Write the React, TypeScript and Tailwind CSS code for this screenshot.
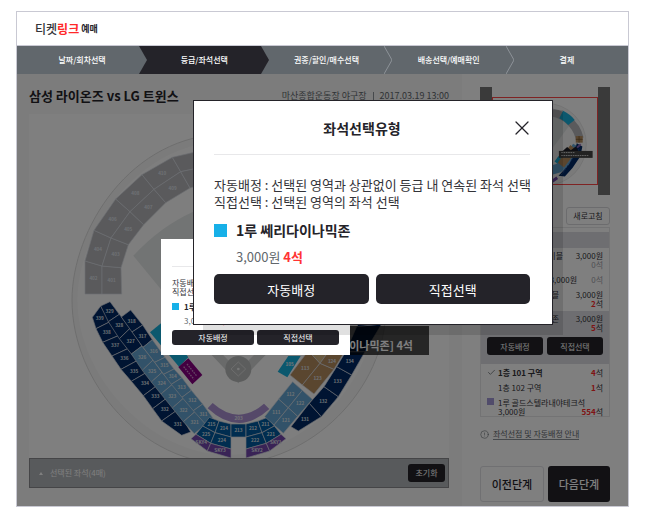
import React from 'react';
import { Check, CircleAlert, X } from 'lucide-react';

type Point = [number, number];

interface BandProps {
  left: Point[];
  right: Point[];
  labels: string[];
  fills: string[];
}

const steps = [
  { id: 'date', label: '날짜/회차선택' },
  { id: 'seat', label: '등급/좌석선택' },
  { id: 'ticket', label: '권종/할인/매수선택' },
  { id: 'delivery', label: '배송선택/예매확인' },
  { id: 'pay', label: '결제' },
];

const NAVY = '#002864';
const SKY = '#64a5d2';
const BLUE = '#005aa0';
const CYAN = '#17b0dc';
const TAN = '#b48c5f';
const GRAY = '#b4b4b8';
const VIOLET = '#7346ac';

// One row of blocks between two edges
const Band: React.FC<BandProps> = ({ left, right, labels, fills }) => (
  <>
    {labels.map((label, i) => {
      const pts = [left[i], right[i], right[i + 1], left[i + 1]];
      const cx = pts.reduce((s, p) => s + p[0], 0) / 4;
      const cy = pts.reduce((s, p) => s + p[1], 0) / 4;
      return (
        <g key={i}>
          <polygon points={pts.map((p) => p.join(',')).join(' ')} fill={fills[i] ?? fills[fills.length - 1]} stroke="#d8dde4" strokeWidth="2" />
          {label && <text x={cx} y={cy + 5} textAnchor="middle" fontSize="14" fontWeight="700" fill="#dde1e8">{label}</text>}
        </g>
      );
    })}
  </>
);

const StadiumMap = () => (
  <svg viewBox="87 342 1260 1032" className="block w-full" role="img" aria-label="좌석 배치도">
    <rect x="87" y="342" width="1260" height="1032" fill="#ffffff" />
    <path d="M216 900 C216 690 390 402 684 402 C960 402 1158 690 1158 920 C1158 1170 930 1392 684 1392 C430 1392 216 1150 216 900Z" fill="#f6f6f6" stroke="#dddddd" strokeWidth="3" />
    <path d="M232 900 C232 710 400 424 684 424 C940 424 1125 700 1125 920 C1125 1150 910 1365 684 1365 C450 1365 232 1130 232 900Z" fill="#fcfcfc" />
    {/* outfield */}
    <path d="M400 767 Q480 680 580 635 L800 610 L960 767 L715 1150Z" fill="#e4e8e8" />

    <g transform="translate(60 330)">
      <Band
        left={[[195, 552], [195, 453], [222, 361], [287, 267], [366, 194], [457, 142], [535, 124]]}
        right={[[246, 552], [246, 468], [273, 384], [330, 305], [402, 238], [482, 185], [545, 172]]}
        labels={['402', '404', '406', '408', '410', '']}
        fills={[GRAY]}
      />
      <Band
        left={[[246, 552], [246, 468], [273, 384], [330, 305], [402, 238], [482, 185], [545, 172]]}
        right={[[305, 552], [303, 473], [325, 404], [371, 344], [437, 278], [510, 234], [560, 220]]}
        labels={['401', '403', '405', '407', '409', '']}
        fills={[GRAY]}
      />
    </g>

    {/* first base side */}
    <g transform="translate(180 810)">
      <Band
        left={[[97, 142], [108, 176], [128, 217], [156, 258], [183, 298], [214, 334], [250, 377], [278, 416], [305, 453], [365, 496]]}
        right={[[122, 108], [150, 155], [175, 197], [203, 236], [231, 272], [262, 306], [294, 344], [322, 383], [352, 420], [392, 486]]}
        labels={['339', '338', '337', '336', '335', '334', '333', '332', '331']}
        fills={[NAVY]}
      />
      <Band
        left={[[122, 108], [145, 155], [178, 206], [214, 252], [247, 301], [274, 336], [303, 372], [337, 414], [370, 455], [403, 491]]}
        right={[[150, 95], [178, 133], [210, 175], [246, 228], [279, 270], [306, 307], [337, 343], [370, 385], [405, 425], [438, 462]]}
        labels={['329', '328', '327', '326', '325', '324', '323', '322', '321']}
        fills={[NAVY, NAVY, NAVY, SKY]}
      />
      <Band
        left={[[184, 141], [216, 186], [249, 232], [284, 277], [311, 313], [334, 343], [366, 382], [400, 422], [436, 462]]}
        right={[[212, 120], [248, 165], [277, 209], [315, 262], [342, 297], [366, 323], [394, 361], [428, 402], [458, 443]]}
        labels={['318', '317', '316', '315', '314', '313', '312', '311']}
        fills={[NAVY, NAVY, SKY]}
      />
      <polygon points="270,187 305,158 385,262 357,290" fill={CYAN} />
      <polygon points="355,291 385,265 427,315 397,343" fill="#870082" />
      <path d="M371 290 L402 328 M381 282 L411 319" stroke="#c88ac8" strokeWidth="4" strokeDasharray="5 3" />
    </g>

    {/* home plate and third base side */}
    <g transform="translate(540 960)">
      <polygon points="75,85 95,105 175,190 257,105 277,85" fill="#d2d4d4" />
      <polygon points="110,85 175,152 242,85" fill="#f6f6f6" />
      <circle cx="175" cy="147" r="39" fill="#b8baba" />
      <polygon points="175,126 197,147 175,168 153,147" fill="none" stroke="#dcdcdc" strokeWidth="3" />
      <circle cx="175" cy="147" r="4" fill="#eeeeee" />

      <path d="M83 265 L98 249 Q175 318 252 251 L268 267 Q176 352 83 265Z" fill="#aa91d2" />
      <text x="176" y="299" textAnchor="middle" fontSize="14" fontWeight="700" fill="#e8ebf0">203</text>

      <Band left={[[88, 292], [117, 303], [153, 312], [198, 312], [234, 303], [263, 292]]} right={[[68, 318], [105, 338], [153, 351], [198, 351], [246, 338], [283, 318]]} labels={['215', '214', '213', '212', '211']} fills={[BLUE]} />
      <Band left={[[68, 318], [105, 338], [153, 351]]} right={[[48, 343], [92, 370], [153, 387]]} labels={['225', '224']} fills={[BLUE]} />
      <Band left={[[198, 351], [246, 338], [283, 318]]} right={[[198, 387], [259, 370], [303, 343]]} labels={['222', '221']} fills={[BLUE]} />
      <Band left={[[48, 343], [92, 370], [153, 387]]} right={[[33, 356], [82, 393], [153, 414]]} labels={['SKY4', 'SKY3']} fills={[VIOLET]} />
      <Band left={[[198, 387], [259, 370], [303, 343]]} right={[[198, 414], [269, 393], [318, 356]]} labels={['SKY2', 'SKY1']} fills={[VIOLET]} />

      <Band left={[[254, 290], [296, 237], [338, 185]]} right={[[282, 315], [325, 263], [367, 211]]} labels={['111', '112']} fills={[SKY]} />
      <Band left={[[282, 315], [325, 263], [367, 211]]} right={[[310, 340], [353, 289], [397, 238]]} labels={['121', '122']} fills={[SKY]} />

      <Band left={[[333, 320], [388, 250], [432, 200], [470, 140], [497, 95], [530, 20], [560, -20]]} right={[[355, 333], [424, 290], [475, 230], [515, 165], [555, 95], [605, 12], [625, -20]]} labels={['131', '132', '133', '134', '', '']} fills={[NAVY]} />
      <Band left={[[330, 165], [385, 92], [420, 45]]} right={[[367, 195], [420, 130], [460, 75]]} labels={['113', '']} fills={[TAN, '#d2b482']} />
      <Band left={[[367, 195], [420, 130], [460, 75]]} right={[[402, 222], [462, 148], [500, 85]]} labels={['123', '']} fills={[TAN]} />
      <text x="456" y="129" textAnchor="middle" fontSize="14" fontWeight="700" fill="#dde1e8">124</text>
      <polygon points="293,155 325,108 362,108 322,172" fill={CYAN} />
      <text x="329" y="137" textAnchor="middle" fontSize="14" fontWeight="700" fill="#e8ebf0">105</text>
    </g>
  </svg>
);

const MiniMap = () => (
  <svg viewBox="69 68 312 260" className="block h-full w-full" role="img" aria-label="전체 좌석 미니맵">
    <ellipse cx="228" cy="208" rx="122" ry="124" fill="#f4f4f4" stroke="#dddddd" strokeWidth="2" />
    <path d="M130 160 L225 80 L300 150 L225 250Z" fill="#dfe3e3" />
    <path d="M125 195 A105 105 0 0 1 330 190" fill="none" stroke="#b4b4b8" strokeWidth="24" />
    <path d="M274 118 Q294 128 305 142" fill="none" stroke={CYAN} strokeWidth="25" />
    <rect x="318" y="183" width="21" height="20" fill={TAN} />
    <path d="M328 183 V203 M318 193 H339" stroke="#6b4d28" strokeWidth="2" />
    <path d="M322 213 L300 252 L266 280 L230 290" fill="none" stroke={SKY} strokeWidth="28" />
    <path d="M272 270 L312 218" stroke={TAN} strokeWidth="26" />
    <path d="M258 263 L270 246" stroke={CYAN} strokeWidth="10" />
    <path d="M321 205 L338 215 L332 244 L308 280 L285 305 L266 303 L298 268 L314 235Z" fill={NAVY} />
    <path d="M275 300 L329 220" stroke="#3c64a8" strokeWidth="3" strokeDasharray="4 4" />
    <path d="M277 230 L292 216 L303 226 L318 215 L328 232Z" fill="#1c1c24" />
    <path d="M322 218 L333 208" stroke="#8c64b4" strokeWidth="6" />
    <path d="M245 321 L262 309" stroke={VIOLET} strokeWidth="9" />
    <rect x="267" y="228" width="102" height="21" fill="#444444" />
    <path d="M274 233 H314 M274 242 H358" stroke="#c8c8c8" strokeWidth="3" strokeDasharray="5 2" />
  </svg>
);

const StepArrow = ({ filled }: { filled: boolean }) => (
  <svg viewBox="0 0 8 28" className="absolute left-0 top-0 h-7 w-2" aria-hidden="true">
    <path d="M0 0 L8 14 L0 28" fill={filled ? '#61676c' : 'none'} stroke={filled ? 'none' : '#8d9298'} strokeWidth="1" />
  </svg>
);

const StepBar = () => (
  <nav aria-label="예매 단계">
    <ol className="grid h-7 grid-cols-5 bg-[#61676c]">
      {steps.map((step, i) => (
        <li
          key={step.id}
          aria-current={i === 1 ? 'step' : undefined}
          className={`relative flex items-center justify-center text-[8px] font-medium text-white ${i === 1 ? 'bg-[#242329]' : ''} ${i < 4 ? 'pl-2' : ''}`}
        >
          {i === 1 && <StepArrow filled />}
          {i === 2 && (
            <svg viewBox="0 0 8 28" className="absolute left-0 top-0 h-7 w-2" aria-hidden="true">
              <path d="M0 0 L8 14 L0 28Z" fill="#242329" />
            </svg>
          )}
          {i > 2 && <StepArrow filled={false} />}
          {step.label}
        </li>
      ))}
    </ol>
  </nav>
);

const SeatTypeDialog = ({ large = false }: { large?: boolean }) => (
  <section
    role="dialog"
    aria-label="좌석선택유형"
    className={
      large
        ? 'absolute left-44 top-[26px] w-[360px] border border-[#242329] bg-white pb-5 pl-5 pr-[22px] text-[13px] leading-[17px] shadow-[10px_10px_0_rgba(0,0,0,0.12)]'
        : 'absolute left-36 top-[165px] w-[189px] bg-white px-[11px] pb-[10px] text-[8px] leading-[9px]'
    }
  >
    <header className={`relative flex items-center justify-center border-b border-[#e8e8ea] ${large ? 'h-[54px] pr-5' : 'h-7'}`}>
      {large && (
        <>
          <h2 className="text-sm font-bold text-[#242329]">좌석선택유형</h2>
          <button type="button" aria-label="닫기" className="absolute -right-1 text-[#242329]">
            <X size={24} strokeWidth={1.25} />
          </button>
        </>
      )}
    </header>
    <div className={`whitespace-nowrap text-[#333338] ${large ? 'mt-[21px]' : 'mt-[11px]'}`}>
      <p>자동배정 : 선택된 영역{large && '과 상관없이 등급 내 연속된 좌석 선택'}</p>
      <p>직접선택 : 선택된 영역{large && '의 좌석 선택'}</p>
    </div>
    <div className={`flex items-center font-bold text-[#242329] ${large ? 'mt-3 gap-[9px] text-sm leading-[17px]' : 'mt-[6px] gap-[5px]'}`}>
      <span className={`bg-[#17b0e8] ${large ? 'size-[13px]' : 'size-[7px]'}`} />
      1루 쎄리다이나믹존
    </div>
    <p className={`text-[#61676c] ${large ? 'ml-[22px] mt-[9px]' : 'ml-3 mt-[5px]'}`}>
      3,000원 <strong className="text-[#ff3333]">4석</strong>
    </p>
    <div className={`flex text-white ${large ? 'mt-[9px] gap-[7px]' : 'mt-[5px] gap-[3px]'}`}>
      <button type="button" className={`flex-1 bg-[#242329] ${large ? 'h-[30px] rounded-[5px]' : 'h-[15px] rounded-[3px]'}`}>자동배정</button>
      <button type="button" className={`flex-1 bg-[#242329] ${large ? 'h-[30px] rounded-[5px]' : 'h-[15px] rounded-[3px]'}`}>직접선택</button>
    </div>
  </section>
);

const GradeList = () => (
  <div className="mt-0.5 border border-[#e6e6e8] pt-1 text-[8px] leading-[9px] text-[#333338]">
    <div className="h-4 bg-[#dcdde2]" />
    <ul>
      <li className="flex px-[6px] py-[3px]">
        <span className="flex-1 text-right">이블</span>
        <span className="w-10 text-right">3,000원<br /><span className="text-[#a0a0a8]">0석</span></span>
      </li>
      <li className="flex px-[6px] py-[3px]">
        <span className="flex-1 text-right">3,000원</span>
        <span className="w-[26px] text-right text-[#a0a0a8]">0석</span>
      </li>
      <li className="flex px-[6px] py-[3px]">
        <span className="flex-1 text-right">블</span>
        <span className="w-11 text-right">3,000원<br /><b className="text-[#ff2828]">2</b>석</span>
      </li>
      <li className="bg-[#dcdde2] px-[6px] pb-[9px] pt-[3px]">
        <div className="flex">
          <span className="flex-1 text-right">존</span>
          <span className="w-11 text-right">3,000원<br /><b className="text-[#ff2828]">5</b>석</span>
        </div>
        <div className="mt-[5px] flex gap-1 text-white">
          <button type="button" className="h-[18px] flex-1 rounded-[3px] bg-[#242329]">자동배정</button>
          <button type="button" className="h-[18px] flex-1 rounded-[3px] bg-[#242329]">직접선택</button>
        </div>
      </li>
      <li className="flex items-center px-[6px] pb-[3px] pt-1 font-bold">
        <Check size={9} strokeWidth={2} className="mr-0.5 text-[#61676c]" />
        <span className="flex-1">1층 101 구역</span>
        <span className="font-normal"><b className="text-[#ff2828]">4</b>석</span>
      </li>
      <li className="flex py-[3px] pl-[17px] pr-[6px]">
        <span className="flex-1">1층 102 구역</span>
        <span><b className="text-[#ff2828]">1</b>석</span>
      </li>
      <li className="flex px-[6px] pt-[3px]">
        <span className="mr-1 size-[7px] bg-[#a398d6]" />
        <div className="flex-1">
          <p className="whitespace-nowrap">1루 골드스텔라내야테크석</p>
          <p className="flex justify-between"><span>3,000원</span><span><b className="text-[#ff2828]">554</b>석</span></p>
        </div>
      </li>
    </ul>
  </div>
);

const App: React.FC = () => {
  return (
    <div className="bg-white pl-4 pr-10 pt-[11px] font-['Noto_Sans_CJK_KR',sans-serif]">
      <div className="border border-[#c9c9d3] bg-white">
        <header className="flex h-[34px] items-center gap-0.5 border-b border-[#c9c9d3] px-[18px]">
          <h1 className="text-xs font-medium text-[#333338]">티켓<span className="font-bold text-[#ff2828]">링크</span></h1>
          <span className="text-[9px] font-bold text-[#242329]">예매</span>
        </header>
        <StepBar />

        <div className="relative flex">
          <main className="min-w-0 flex-1 bg-[#f8f8f8] pb-[18px] pl-3 pr-[13px]">
            <div className="flex h-10 items-center justify-between pt-1">
              <h2 className="text-[13px] font-bold text-[#242329]">삼성 라이온즈 vs LG 트윈스</h2>
              <p className="flex items-center gap-[6px] text-[9px] text-[#61676c]">
                <span>마산종합운동장 야구장</span>
                <span className="h-[9px] w-px bg-[#8d9298]" />
                <span>2017.03.19 13:00</span>
              </p>
            </div>
            <div className="relative">
              <StadiumMap />
              <div className="absolute right-5 top-[212px] flex h-[29px] w-20 items-end justify-end bg-black/70 pb-[3px] pr-4 text-[11px] font-bold leading-[14px] text-white">
                <p className="whitespace-nowrap">이나믹존] 4석</p>
              </div>
            </div>
            <div className="flex h-[30px] items-center border border-[#8a8b8e] bg-[#b1b4b8] pl-[9px] pr-[3px] text-[8px] text-white">
              <svg viewBox="0 0 4 3" className="h-[3px] w-1" aria-hidden="true"><path d="M0 3 L2 0 L4 3Z" fill="#ffffff" /></svg>
              <span className="ml-[7px] flex-1">선택된 좌석(4매)</span>
              <button type="button" className="h-[18px] w-[37px] rounded-[3px] bg-[#242329]">초기화</button>
            </div>
          </main>

          <aside className="w-[166px] px-[18px] pt-[13px]">
            <div className="flex h-[108px]">
              <div className="w-3 bg-[#747474]" />
              <div className="mt-[10px] h-[88px] flex-1 border border-[#ff4646]"><MiniMap /></div>
              <div className="w-3 bg-[#747474]" />
            </div>
            <div className="mt-3 flex justify-end">
              <button type="button" className="h-[18px] w-11 rounded-[3px] border border-[#d8d8dc] text-[8px] text-[#333338]">새로고침</button>
            </div>
            <GradeList />
            <a href="#guide" className="mt-3 flex items-center gap-1 text-[8px] text-[#61676c]">
              <CircleAlert size={9} strokeWidth={1.5} />
              <span className="border-b border-[#8d9298] leading-[10px]">좌석선점 및 자동배정 안내</span>
            </a>
            <div className="mt-[26px] flex gap-1 text-[11px] font-medium">
              <button type="button" className="h-9 flex-1 rounded-[3px] border border-[#e0e0e4] text-[#242329]">이전단계</button>
              <button type="button" className="h-9 flex-1 rounded-[3px] bg-[#242329] text-white">다음단계</button>
            </div>
          </aside>

          <div className="absolute inset-0 bg-black/50" />
          <SeatTypeDialog />
          <SeatTypeDialog large />
        </div>
      </div>
    </div>
  );
};

export default App;
